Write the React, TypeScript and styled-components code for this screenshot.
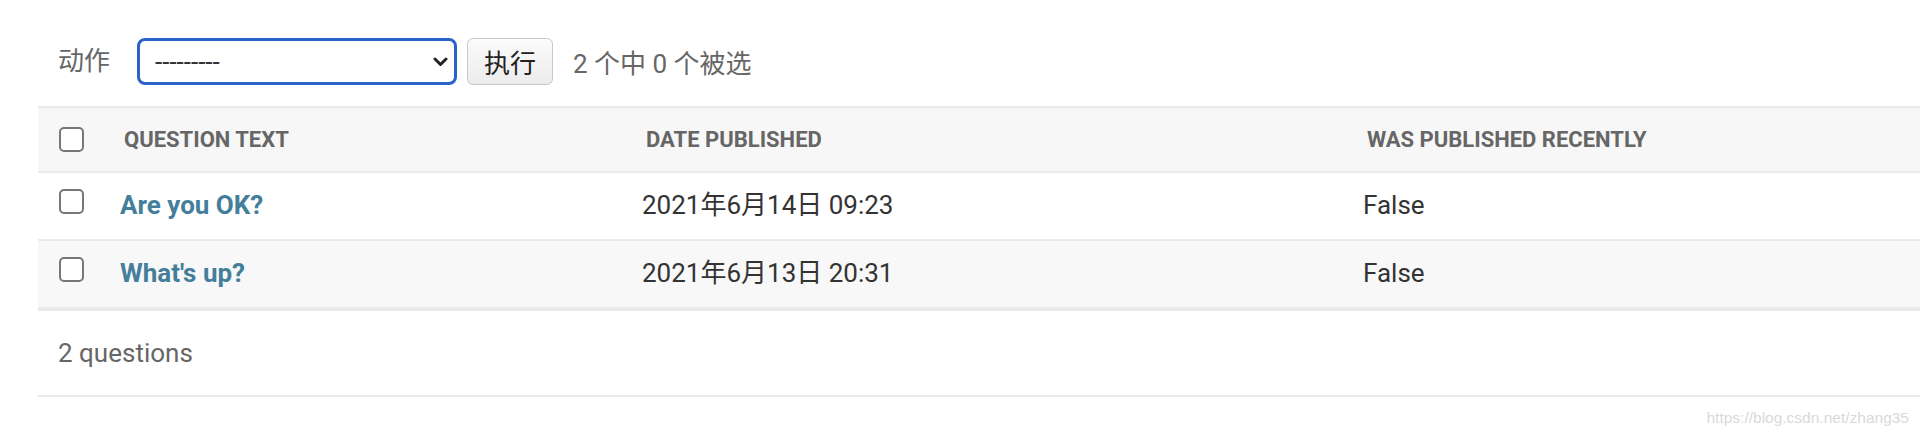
import React from 'react';
import styled, { createGlobalStyle } from 'styled-components';

const Global = createGlobalStyle`
  html, body { margin: 0; padding: 0; background: #fff; }
  body {
    font-family: Roboto, "Noto Sans CJK SC", "DejaVu Sans", sans-serif;
    color: #333;
    overflow: hidden;
  }
  * { box-sizing: border-box; }
`;

const Page = styled.div`
  position: relative;
  height: 436px;
  padding-left: 38px;
`;

const Actions = styled.div`
  display: flex;
  align-items: center;
  padding: 38px 20px 21px;
  color: #666;
  font-size: 26px;
`;

const Label = styled.label`
  margin-right: 27px;
  line-height: 47px;
`;

const SelectWrap = styled.div`
  position: relative;
  width: 320px;
  height: 47px;
`;

const Select = styled.select`
  appearance: none;
  -webkit-appearance: none;
  width: 100%;
  height: 100%;
  border: 3px solid #2b62c8;
  border-radius: 8px;
  background: #fff;
  outline: none;
  padding: 0 40px 0 15px;
  font-family: Roboto, "Noto Sans CJK SC", sans-serif;
  font-size: 26px;
  color: #333;
`;

const Chevron = styled.svg`
  position: absolute;
  right: 9px;
  top: 19px;
  pointer-events: none;
`;

const GoButton = styled.button`
  margin-left: 10px;
  width: 86px;
  height: 47px;
  padding: 0;
  border: 1px solid #c9c9c9;
  border-radius: 6px;
  background: linear-gradient(#fbfbfb, #ececec);
  font-family: Roboto, "Noto Sans CJK SC", sans-serif;
  font-size: 26px;
  color: #222;
`;

const Counter = styled.span`
  margin-left: 20px;
  color: #666;
`;

const Table = styled.table`
  width: 100%;
  border-collapse: collapse;
  table-layout: fixed;
`;

const HeadCell = styled.th<{ $center?: boolean }>`
  padding: 0;
  background: #f7f7f7;
  border-top: 2px solid #eaeaea;
  border-bottom: 2px solid #eaeaea;
  text-align: ${(p) => (p.$center ? 'center' : 'left')};
  vertical-align: middle;
  white-space: nowrap;
`;

const HeadText = styled.span`
  display: block;
  padding: 16px 20px;
  line-height: 31px;
  font-size: 22px;
  font-weight: 700;
  color: #666;
  text-transform: uppercase;
`;

const Row = styled.tr<{ $alt?: boolean }>`
  background: ${(p) => (p.$alt ? '#f8f8f8' : '#fff')};
`;

const Cell = styled.td<{ $center?: boolean }>`
  padding: 16px 16px 18px;
  line-height: 32px;
  font-size: 26px;
  color: #333;
  vertical-align: top;
  text-align: ${(p) => (p.$center ? 'center' : 'left')};
  border-bottom: 2px solid #eaeaea;
`;

const TitleCell = styled.th`
  padding: 16px 16px 18px;
  line-height: 32px;
  font-size: 26px;
  font-weight: 700;
  text-align: left;
  vertical-align: top;
  border-bottom: 2px solid #eaeaea;
`;

const Link = styled.a`
  color: #447e9b;
  text-decoration: none;
`;

const Check = styled.input.attrs({ type: 'checkbox' })`
  appearance: none;
  -webkit-appearance: none;
  display: block;
  width: 25px;
  height: 25px;
  margin: 0 auto;
  border: 2px solid #777;
  border-radius: 5px;
  background: #fff;
`;

const Paginator = styled.p`
  margin: 0;
  padding: 20px;
  line-height: 44px;
  font-size: 26px;
  color: #666;
  border-top: 2px solid #eaeaea;
  border-bottom: 2px solid #eaeaea;
`;

const Watermark = styled.span`
  position: absolute;
  right: 11px;
  bottom: 9px;
  font-family: "Liberation Sans", Arial, sans-serif;
  font-size: 15.5px;
  color: #d9d9d9;
`;

const rows = [
  { q: 'Are you OK?', d: '2021年6月14日 09:23', r: 'False' },
  { q: "What's up?", d: '2021年6月13日 20:31', r: 'False' },
];

export default function App() {
  return (
    <>
      <Global />
      <Page>
        <Actions>
          <Label>动作</Label>
          <SelectWrap>
            <Select defaultValue="">
              <option value="">---------</option>
              <option value="delete">删除所选的 questions</option>
            </Select>
            <Chevron width="15" height="10" viewBox="0 0 15 10">
              <polyline points="2,2 7.5,7.5 13,2" fill="none" stroke="#222" strokeWidth="3" strokeLinecap="round" strokeLinejoin="round" />
            </Chevron>
          </SelectWrap>
          <GoButton>执行</GoButton>
          <Counter>2 个中 0 个被选</Counter>
        </Actions>
        <Table>
          <colgroup>
            <col style={{ width: 66 }} />
            <col style={{ width: 522 }} />
            <col style={{ width: 721 }} />
            <col />
          </colgroup>
          <thead>
            <tr>
              <HeadCell $center>
                <Check />
              </HeadCell>
              <HeadCell><HeadText>Question text</HeadText></HeadCell>
              <HeadCell><HeadText>Date published</HeadText></HeadCell>
              <HeadCell><HeadText>Was published recently</HeadText></HeadCell>
            </tr>
          </thead>
          <tbody>
            {rows.map((r, i) => (
              <Row key={r.q} $alt={i % 2 === 1}>
                <Cell $center><Check /></Cell>
                <TitleCell><Link href="#">{r.q}</Link></TitleCell>
                <Cell>{r.d}</Cell>
                <Cell>{r.r}</Cell>
              </Row>
            ))}
          </tbody>
        </Table>
        <Paginator>2 questions</Paginator>
        <Watermark>https://blog.csdn.net/zhang35</Watermark>
      </Page>
    </>
  );
}
